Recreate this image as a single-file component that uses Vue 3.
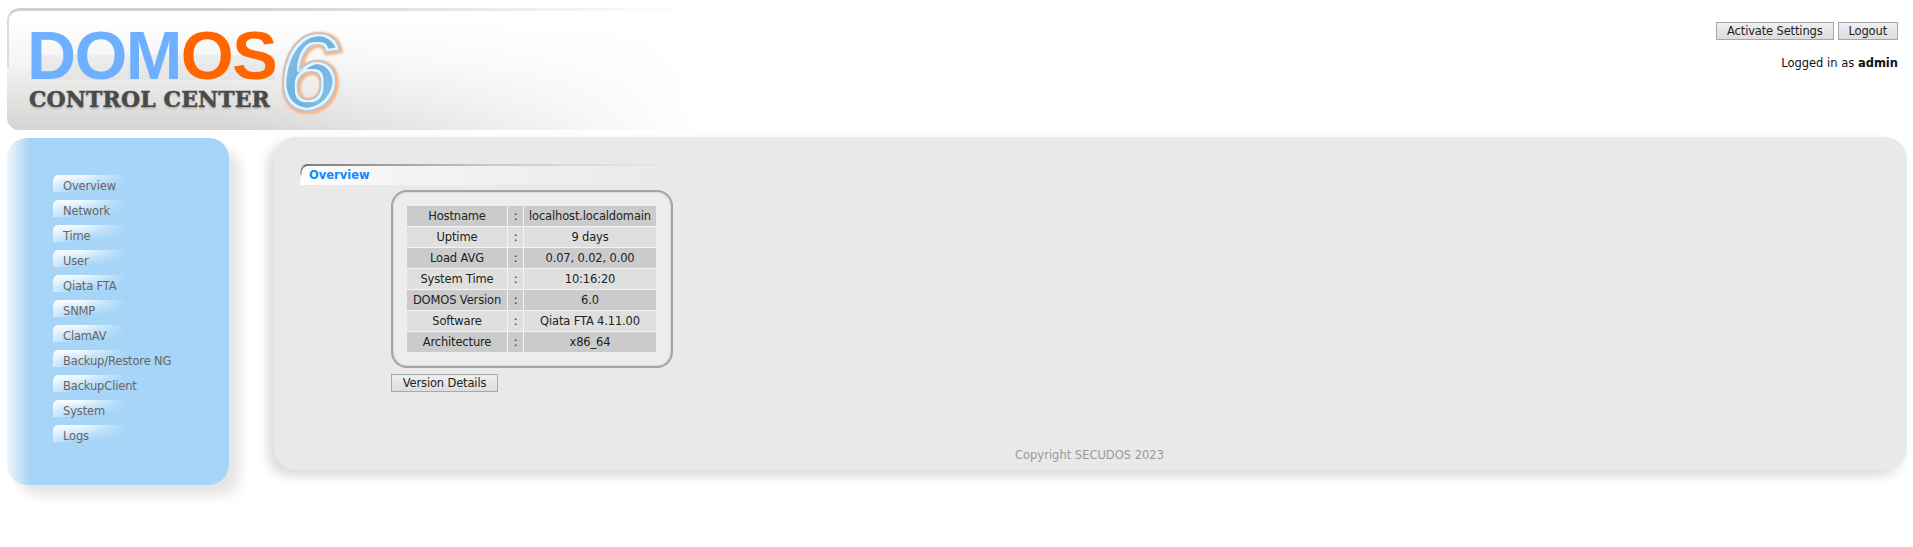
<script setup>
const menu = ['Overview', 'Network', 'Time', 'User', 'Qiata FTA', 'SNMP', 'ClamAV', 'Backup/Restore NG', 'BackupClient', 'System', 'Logs']

const rows = [
  ['Hostname', 'localhost.localdomain'],
  ['Uptime', '9 days'],
  ['Load AVG', '0.07, 0.02, 0.00'],
  ['System Time', '10:16:20'],
  ['DOMOS Version', '6.0'],
  ['Software', 'Qiata FTA 4.11.00'],
  ['Architecture', 'x86_64']
]
</script>

<template>
  <div class="page">
    <header class="top">
      <div class="brand">
        <div class="logo">
          <div class="word"><span class="blue">DOM</span><span class="orange">OS</span></div>
          <div class="sub">CONTROL CENTER</div>
        </div>
        <svg class="six" width="70" height="95" viewBox="0 0 70 95">
          <defs>
            <linearGradient id="sixfill" x1="0" y1="0" x2="1" y2="1">
              <stop offset="0" stop-color="#a9d4f0" />
              <stop offset="0.5" stop-color="#6fb1e0" />
              <stop offset="1" stop-color="#9ccdec" />
            </linearGradient>
            <filter id="glow" x="-20%" y="-20%" width="140%" height="140%">
              <feGaussianBlur stdDeviation="0.9" />
            </filter>
            <filter id="thin1" x="-10%" y="-10%" width="120%" height="120%">
              <feMorphology operator="erode" radius="1.4" />
              <feGaussianBlur stdDeviation="0.3" />
            </filter>
            <filter id="thin2" x="-10%" y="-10%" width="120%" height="120%">
              <feMorphology operator="erode" radius="2.6" />
              <feGaussianBlur stdDeviation="0.7" />
            </filter>
          </defs>
          <text class="six-glow" x="4" y="85" filter="url(#glow)">6</text>
          <text class="six-line" x="3" y="84">6</text>
          <text class="six-body" x="3" y="84">6</text>
          <text class="six-pale" x="3" y="84" filter="url(#thin1)">6</text>
          <text x="3" y="84" fill="url(#sixfill)" filter="url(#thin2)">6</text>
        </svg>
      </div>
      <div class="account">
        <div class="actions">
          <button>Activate Settings</button>
          <button>Logout</button>
        </div>
        <div class="who">Logged in as <b>admin</b></div>
      </div>
    </header>

    <div class="body">
      <nav class="side">
        <a v-for="m in menu" :key="m" class="item">{{ m }}</a>
      </nav>
      <main class="main">
        <h1 class="title">Overview</h1>
        <div class="content">
          <div class="box">
            <table>
              <tbody>
                <tr v-for="r in rows" :key="r[0]">
                  <td class="k">{{ r[0] }}</td>
                  <td class="c">:</td>
                  <td class="v">{{ r[1] }}</td>
                </tr>
              </tbody>
            </table>
          </div>
          <button class="details">Version Details</button>
        </div>
        <div class="copy">Copyright SECUDOS 2023</div>
      </main>
    </div>
  </div>
</template>

<style>
body {
  background: #fff;
}
</style>

<style scoped>
.page {
  width: 1913px;
  height: 547px;
  overflow: hidden;
  box-sizing: border-box;
  padding: 8px 6px 0 6px;
  font-family: Tahoma, "DejaVu Sans", sans-serif;
  font-size: 11.5px;
  letter-spacing: -0.15px;
  color: #222;
}

.top {
  display: flex;
  justify-content: space-between;
  height: 122px;
}

.brand {
  position: relative;
  width: 700px;
  height: 122px;
  margin-left: 1px;
  box-sizing: border-box;
  padding: 23px 0 0 20px;
  border-radius: 12px 0 0 12px;
  background:
    linear-gradient(90deg, rgba(255,255,255,0) 30%, #fff 98%),
    linear-gradient(180deg, #fff 10%, #f4f4f4 45%, #d4d4d2 100%);
}

.brand::before {
  content: "";
  position: absolute;
  left: 0;
  right: 0;
  top: 0;
  height: 60px;
  border-radius: 12px 0 0 0;
  border-top: 3px solid #cfcfcf;
  border-left: 2px solid #dcdcdc;
  box-sizing: border-box;
  -webkit-mask-image: linear-gradient(90deg, #000 30%, transparent 98%);
  mask-image: linear-gradient(90deg, #000 30%, transparent 98%);
}

.logo {
  position: relative;
  width: 250px;
}

.word {
  font-family: "Liberation Sans", Arial, sans-serif;
  font-weight: 700;
  font-size: 68px;
  line-height: 49px;
  height: 49px;
  letter-spacing: -1.6px;
  white-space: nowrap;
  background: linear-gradient(180deg, #ededed 0, #e4e4e4 100%) 5px 24px / 243px 25px no-repeat;
}

.blue {
  color: #6eb0ff;
}

.orange {
  color: #ff6600;
}

.sub {
  margin: 9px 0 0 2px;
  font-family: "DejaVu Serif", serif;
  font-weight: 700;
  font-size: 22px;
  line-height: 20px;
  letter-spacing: 0.1px;
  color: #4a4a48;
  white-space: nowrap;
  -webkit-text-stroke: 0.5px #4a4a48;
  text-shadow: 0 2px 2px rgba(0,0,0,0.18);
}

.six {
  position: absolute;
  left: 268px;
  top: 18px;
  overflow: visible;
}

.six text {
  font-family: "Liberation Sans", Arial, sans-serif;
  font-style: italic;
  font-weight: 700;
  font-size: 110px;
  letter-spacing: 0;
}

.six-glow {
  fill: none;
  stroke: #f4b481;
  stroke-width: 4;
}

.six-line {
  fill: none;
  stroke: #f2b893;
  stroke-width: 1.5;
}

.six-body {
  fill: #9fcdee;
}

.six-pale {
  fill: #e9f4fb;
}

.account {
  text-align: right;
  padding: 14px 9px 0 0;
}

.actions {
  display: flex;
  gap: 4px;
  justify-content: flex-end;
}

button {
  height: 18px;
  padding: 0 10px;
  box-sizing: border-box;
  background: linear-gradient(180deg, #f0f0f0, #dcdcdc);
  border: 1px solid #a8a8a8;
  border-radius: 0;
  font: inherit;
  letter-spacing: inherit;
  line-height: 16px;
  color: #222;
}

.who {
  margin-top: 16px;
  line-height: 14px;
  letter-spacing: 0;
  color: #111;
}

.body {
  display: flex;
  align-items: flex-start;
  gap: 45px;
  margin-top: 7px;
}

.side {
  flex: none;
  width: 222px;
  height: 347px;
  margin-top: 1px;
  margin-left: 1px;
  box-sizing: border-box;
  padding: 37px 0 0 46px;
  display: flex;
  flex-direction: column;
  gap: 5px;
  border-radius: 20px;
  background: linear-gradient(90deg, #f0f7fc 0, #a3d3f5 24px, #a6d5f7 24px);
  box-shadow: 11px 11px 12px rgba(0,0,0,0.1);
}

.item {
  position: relative;
  isolation: isolate;
  height: 20px;
  padding-left: 10px;
  line-height: 22px;
  color: #666;
  white-space: nowrap;
}

.item::before {
  content: "";
  position: absolute;
  z-index: -1;
  left: 0;
  top: 0;
  width: 74px;
  height: 17px;
  border-radius: 5px 0 0 0;
  background:
    linear-gradient(90deg, rgba(255,255,255,0.5), rgba(255,255,255,0) 30%),
    linear-gradient(180deg, rgba(255,255,255,0.95), rgba(255,255,255,0) 90%);
  -webkit-mask-image: linear-gradient(90deg, #000 35%, transparent);
  mask-image: linear-gradient(90deg, #000 35%, transparent);
}

.main {
  position: relative;
  flex: 1;
  height: 333px;
  box-sizing: border-box;
  padding: 27px 0 0 26px;
  border-radius: 22px;
  background: #e9e9e9;
  box-shadow: -6px 6px 12px rgba(0,0,0,0.15);
}

.title {
  position: relative;
  margin: 0;
  width: 380px;
  height: 21px;
  box-sizing: border-box;
  padding: 4px 0 0 9px;
  font-size: 11.5px;
  letter-spacing: 0;
  line-height: 15px;
  font-weight: 700;
  color: #0a8cff;
  border-radius: 8px 0 0 0;
  background:
    linear-gradient(90deg, #7d7d7d, #c8c8c8 50%, rgba(233,233,233,0)) top / 100% 2px no-repeat,
    linear-gradient(90deg, rgba(255,255,255,0.95) 0, rgba(255,255,255,0.5) 25%, rgba(255,255,255,0.3) 60%, rgba(255,255,255,0) 100%);
}

.title::before {
  content: "";
  position: absolute;
  left: 0;
  top: 0;
  width: 10px;
  height: 14px;
  box-sizing: border-box;
  border-top: 2px solid #7d7d7d;
  border-left: 2px solid #8c8c8c;
  border-radius: 8px 0 0 0;
  -webkit-mask-image: linear-gradient(180deg, #000 40%, transparent);
  mask-image: linear-gradient(180deg, #000 40%, transparent);
}

.content {
  margin: 5px 0 0 91px;
  display: flex;
  flex-direction: column;
  align-items: flex-start;
}

.box {
  box-sizing: border-box;
  width: 282px;
  height: 178px;
  padding: 14px;
  border: 2px solid #a4a4a4;
  border-radius: 16px;
  background: #ededed;
  box-shadow: inset 0 0 2px rgba(0,0,0,0.25);
}

table {
  width: 249px;
  border-collapse: collapse;
  table-layout: fixed;
  text-align: center;
}

td {
  height: 20px;
  padding: 0;
  white-space: nowrap;
  color: #222;
  border-left: 1px solid #f4f4f4;
  border-top: 1px solid #f4f4f4;
}

tr:first-child td {
  border-top: none;
}

td:first-child {
  border-left: none;
}

.k {
  width: 100px;
}

.c {
  width: 15px;
}

tr:nth-child(odd) td {
  background: #cbcbcb;
}

tr:nth-child(even) td {
  background: #dfdfdf;
}

.details {
  margin-top: 6px;
  width: 107px;
  padding: 0;
}

.copy {
  position: absolute;
  left: 0;
  right: 2px;
  bottom: 7px;
  text-align: center;
  color: #999;
  letter-spacing: 0;
  line-height: 16px;
}
</style>
